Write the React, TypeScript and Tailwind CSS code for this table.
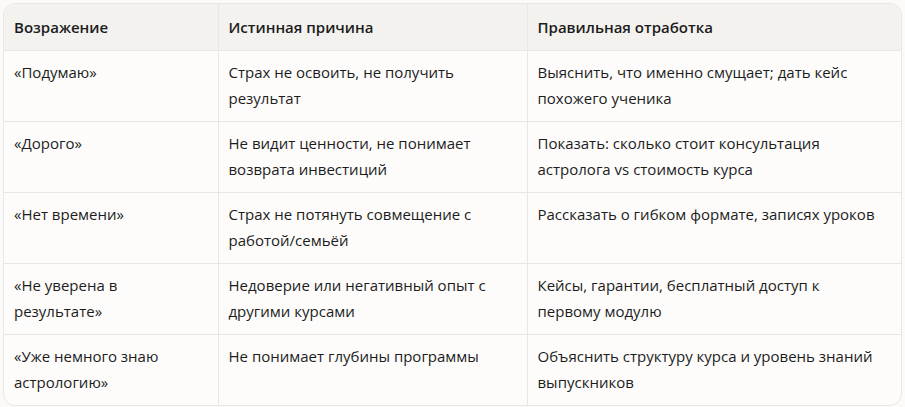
const rows = [
  ["«Подумаю»", "Страх не освоить, не получить результат", "Выяснить, что именно смущает; дать кейс похожего ученика"],
  ["«Дорого»", "Не видит ценности, не понимает возврата инвестиций", "Показать: сколько стоит консультация астролога vs стоимость курса"],
  ["«Нет времени»", "Страх не потянуть совмещение с работой/семьёй", "Рассказать о гибком формате, записях уроков"],
  ["«Не уверена в результате»", "Недоверие или негативный опыт с другими курсами", "Кейсы, гарантии, бесплатный доступ к первому модулю"],
  ["«Уже немного знаю астрологию»", "Не понимает глубины программы", "Объяснить структуру курса и уровень знаний выпускников"],
];

const headers = ["Возражение", "Истинная причина", "Правильная отработка"];

export default function App() {
  return (
    <div
      className="w-[905px] h-[407px] bg-[#fbfaf8] p-[3px] text-[#1c1c1c]"
      style={{ fontFamily: '"Open Sans", "Noto Sans", sans-serif' }}
    >
      <div className="overflow-hidden rounded-[12px] border border-[#e9e7e3] bg-[#fdfcfb]">
        <table className="w-full border-collapse text-[15px] leading-[26px]">
          <colgroup>
            <col className="w-[214px]" />
            <col className="w-[309px]" />
            <col />
          </colgroup>
          <thead>
            <tr className="bg-[#f3f2ef]">
              {headers.map((h, i) => (
                <th
                  key={h}
                  className={`h-[46px] pl-[10px] pr-5 text-left align-middle font-semibold ${i > 0 ? "border-l border-[#e9e7e3]" : ""}`}
                >
                  {h}
                </th>
              ))}
            </tr>
          </thead>
          <tbody>
            {rows.map((r) => (
              <tr key={r[0]} className="border-t border-[#e9e7e3]">
                {r.map((c, i) => (
                  <td
                    key={i}
                    className={`h-[71px] pl-[10px] pr-5 pt-[8px] pb-[10px] align-top ${i > 0 ? "border-l border-[#e9e7e3]" : ""}`}
                  >
                    {c}
                  </td>
                ))}
              </tr>
            ))}
          </tbody>
        </table>
      </div>
    </div>
  );
}
